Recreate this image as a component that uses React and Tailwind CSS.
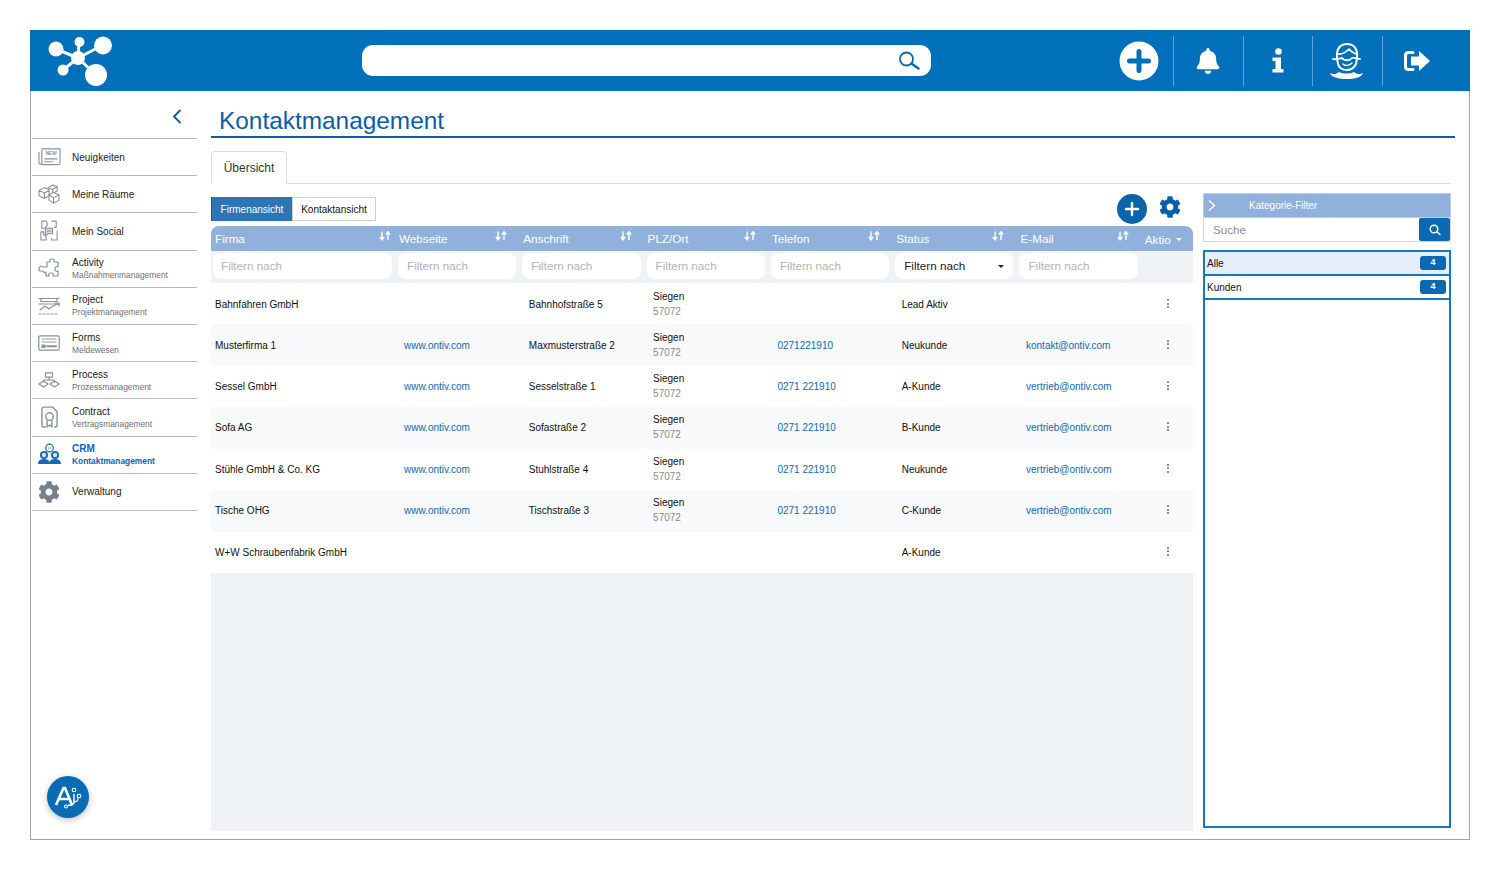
import React from "react";
import { FaBell, FaCog } from "react-icons/fa";

const G = "#87929c";
const stroke = { fill: "none", stroke: G, strokeWidth: 1.2, strokeLinecap: "round", strokeLinejoin: "round" };

const Icons = {
  news: (
    <svg width="23" height="20" viewBox="0 0 24 20" {...stroke}>
      <path d="M4 3v13c0 2-3 2-3 0V5" />
      <path d="M4 1.500h19v15c0 1-1 1.500-2 1.500H4" />
      <text x="8" y="8" fontSize="5" fontWeight="700" fill={G} stroke="none" fontFamily="Liberation Sans">NEW</text>
      <path d="M7 12h13M7 15h8" />
    </svg>
  ),
  rooms: (
    <svg width="22" height="20" viewBox="0 0 24 22" {...stroke}>
      <path d="M1 7l6-3 5 2v7l-5 3-6-3z M1 7l6 3 5-3 M7 10v6" />
      <path d="M11 4l5-3 5 2v5l-3 1 M11 4l5 2 5-3 M16 6v3" />
      <path d="M12 12l5-3 6 3v6l-6 3-5-3z M12 12l5 3 6-3 M17 15v6" />
    </svg>
  ),
  social: (
    <svg width="18" height="22" viewBox="0 0 20 24" {...stroke}>
      <path d="M7 1H2v8h3l3-3V3z M13 1h5v7h-2 M1 13v9h6v-3l-3-3v-3z M19 12v10h-6v-2" />
      <path d="M6 9h8v6H9l-3 2z" fill={G} fillOpacity="0.35" />
      <path d="M8 12h4" />
    </svg>
  ),
  puzzle: (
    <svg width="22" height="22" viewBox="0 0 22 22" {...stroke}>
      <path d="M9 4h3c-1-2 0-3 2-3s3 1 2 3h4v5c-2-1-3 0-3 2s1 3 3 2v5h-5c1-2 0-3-2-3s-3 1-2 3H8v-4c-2 1-3 0-3-1H2c-1 0-1-1-1-2s1-3 2-3l2 1h4z" />
    </svg>
  ),
  project: (
    <svg width="22" height="18" viewBox="0 0 22 18" {...stroke}>
      <path d="M1 1.500h20M3 1.500v3h16v-3M1 7h20" />
      <path d="M2 13l5-4 4 3 4-3 5-2M17 6h4v3" />
      <path d="M1 17h20" strokeDasharray="2 2" />
    </svg>
  ),
  forms: (
    <svg width="22" height="16" viewBox="0 0 22 16" {...stroke}>
      <rect x="0.800" y="0.800" width="20.400" height="14.400" rx="1.500" />
      <path d="M4 4h14M4 7h14" strokeDasharray="1.400 1.200" />
      <rect x="4" y="10" width="3" height="2.400" fill={G} />
      <path d="M9 11.200h9" strokeWidth="2" />
    </svg>
  ),
  process: (
    <svg width="22" height="16" viewBox="0 0 22 16" {...stroke}>
      <rect x="7.500" y="0.800" width="7" height="4.400" />
      <path d="M11 5.200V8M5.500 10V8h11v2" />
      <path d="M5.500 9l4.500 3-4.500 3L1 12z M16.500 9l4.500 3-4.500 3L12 12z" />
    </svg>
  ),
  contract: (
    <svg width="17" height="23" viewBox="0 0 18 24" fill="none" stroke={G} strokeWidth="1.500" strokeLinejoin="round">
      <path d="M5 22H3c-1 0-2-1-2-2V3c0-1 1-2 2-2h9l5 5v14c0 1-1 2-2 2h-1" />
      <circle cx="9" cy="11" r="4" />
      <path d="M6.500 15v7l2.500-2 2.500 2v-7" />
    </svg>
  ),
  crm: (
    <svg width="23" height="23" viewBox="0 0 23 23">
      <circle cx="11.500" cy="5" r="3.800" fill="none" stroke="#1668b8" strokeWidth="1.200" />
      <path d="M10 5h3" stroke="#1668b8" strokeWidth="1" strokeDasharray="1 0.800" />
      <circle cx="6" cy="12" r="4" fill="#1668b8" />
      <circle cx="17" cy="12" r="4" fill="#1668b8" />
      <circle cx="6" cy="12" r="2.200" fill="#cfe0f3" />
      <circle cx="17" cy="12" r="2.200" fill="#cfe0f3" />
      <path d="M0 21c0-4 3-5 6-5s5 1 5.500 3c.5-2 2.500-3 5.500-3s6 1 6 5z" fill="#1668b8" />
    </svg>
  ),
  cog: <FaCog size={22} color="#76818c" />,
};

const NAV = [
  { t: "Neuigkeiten", i: "news" },
  { t: "Meine Räume", i: "rooms" },
  { t: "Mein Social", i: "social" },
  { t: "Activity", s: "Maßnahmenmanagement", i: "puzzle" },
  { t: "Project", s: "Projektmanagement", i: "project" },
  { t: "Forms", s: "Meldewesen", i: "forms" },
  { t: "Process", s: "Prozessmanagement", i: "process" },
  { t: "Contract", s: "Vertragsmanagement", i: "contract" },
  { t: "CRM", s: "Kontaktmanagement", i: "crm", active: true },
  { t: "Verwaltung", i: "cog" },
];

const COLS = ["Firma", "Webseite", "Anschrift", "PLZ/Ort", "Telefon", "Status", "E-Mail"];

const ROWS = [
  ["Bahnfahren GmbH", "", "Bahnhofstraße 5", true, "", "Lead Aktiv", ""],
  ["Musterfirma 1", "www.ontiv.com", "Maxmusterstraße 2", true, "0271221910", "Neukunde", "kontakt@ontiv.com"],
  ["Sessel GmbH", "www.ontiv.com", "Sesselstraße 1", true, "0271 221910", "A-Kunde", "vertrieb@ontiv.com"],
  ["Sofa AG", "www.ontiv.com", "Sofastraße 2", true, "0271 221910", "B-Kunde", "vertrieb@ontiv.com"],
  ["Stühle GmbH & Co. KG", "www.ontiv.com", "Stuhlstraße 4", true, "0271 221910", "Neukunde", "vertrieb@ontiv.com"],
  ["Tische OHG", "www.ontiv.com", "Tischstraße 3", true, "0271 221910", "C-Kunde", "vertrieb@ontiv.com"],
  ["W+W Schraubenfabrik GmbH", "", "", false, "", "A-Kunde", ""],
];

const GRID = "grid grid-cols-[184px_124.300px_124.300px_124.300px_124.300px_124.300px_124.300px_52px]";

function Sort() {
  return (
    <svg width="12" height="10" viewBox="0 0 12 10" fill="none" stroke="#fff" strokeWidth="1.400">
      <path d="M3 0.500v8M0.800 6l2.200 2.800L5.200 6M9 9V1M6.800 3.500L9 0.800l2.200 2.700" />
    </svg>
  );
}

function Dots() {
  return (
    <div className="flex flex-col gap-[1.500px] items-center w-full pl-[2px]">
      <span className="w-[2.500px] h-[2px] bg-[#8a939b]" />
      <span className="w-[2.500px] h-[2px] bg-[#8a939b]" />
      <span className="w-[2.500px] h-[2px] bg-[#8a939b]" />
    </div>
  );
}

function Logo() {
  return (
    <svg width="70" height="54" viewBox="46 33 70 54" fill="#fff" stroke="#fff">
      <path d="M78 57L79 41M78 57L103 44M78 57L56 48M78 57L63 69M78 57L96 74" strokeWidth="3" fill="none" />
      <g stroke="none">
        <circle cx="78" cy="57" r="7" />
        <circle cx="79.500" cy="41" r="5" />
        <circle cx="103" cy="44.500" r="9" />
        <circle cx="56" cy="48" r="7.500" />
        <circle cx="63" cy="69" r="5.500" />
        <circle cx="96" cy="74" r="11" />
      </g>
    </svg>
  );
}

function HeaderCell({ children, sep }) {
  return (
    <div className={`w-[69.500px] h-[50px] flex items-center justify-center ${sep ? "border-r border-[#5fa0d6]" : ""}`}>
      {children}
    </div>
  );
}

export default function App() {
  return (
    <div className="w-[1500px] h-[870px] p-[30px] bg-white [font-family:'Liberation_Sans',Arial,sans-serif] overflow-hidden">
      <div className="w-[1440px] h-[810px] flex flex-col border-x border-b border-[#a3a3a3]">
        {/* Top bar */}
        <header className="h-[61px] -mx-px shrink-0 bg-[#0070ba] flex items-center">
          <div className="ml-[16px] w-[316px]"><Logo /></div>
          <div className="w-[569px] h-[31px] bg-white rounded-[11px] flex items-center justify-end pr-[10px]">
            <svg width="23" height="20" viewBox="0 0 23 20" fill="none" stroke="#0b67ad" strokeWidth="1.800" strokeLinecap="round">
              <circle cx="8.500" cy="8" r="6.500" />
              <path d="M13.500 12.500l7 5" strokeWidth="2.400" />
            </svg>
          </div>
          <div className="ml-auto mr-[18px] flex items-center">
            <HeaderCell sep>
              <svg width="40" height="40" viewBox="0 0 40 40">
                <circle cx="20" cy="20" r="19.500" fill="#fff" />
                <path d="M20 10.500v19M10.500 20h19" stroke="#0070ba" strokeWidth="5" strokeLinecap="round" />
              </svg>
            </HeaderCell>
            <HeaderCell sep><FaBell size={26} color="#fff" /></HeaderCell>
            <HeaderCell sep>
              <svg width="14" height="25" viewBox="0 0 14 25" fill="#fff">
                <circle cx="7.500" cy="3.500" r="3.300" />
                <path d="M1.500 9.500h8.500v11.500h2.500v3.500H1.500V21h3v-8h-3z" />
              </svg>
            </HeaderCell>
            <HeaderCell sep>
              <svg width="36" height="38" viewBox="0 0 36 38" fill="none" stroke="#fff" strokeWidth="2" strokeLinecap="round" strokeLinejoin="round">
                <path d="M8 16C7 6 12 2 18 2c7 0 11 5 10 14l-1 6c-2 4-6 6-9 6-4 0-8-2-9-6z" />
                <path d="M9 12c5 1 9-3 11-5 2 3 5 4 7 5" strokeWidth="1.600" />
                <path d="M4 17c4 1 7-1 9-1 2 3 8 3 10 0 2-1 6 1 8 1" strokeWidth="1.800" />
                <path d="M14 22c2 2 6 2 9-1" strokeWidth="1.500" />
                <path d="M1 31c3 2 7 1 9-1 4 2 11 2 15 0 2 2 6 3 9 1-1 4-8 6-16 6S2 35 1 31z" fill="#fff" stroke="none" />
              </svg>
            </HeaderCell>
            <HeaderCell>
              <svg width="28" height="22" viewBox="0 0 28 22">
                <path d="M10 2.500H5.500C3.500 2.500 2.500 3.500 2.500 5.500v11c0 2 1 3 3 3H10" fill="none" stroke="#fff" strokeWidth="3" strokeLinecap="round" />
                <path d="M16 1l11 10-11 10v-5.500H8v-9h8z" fill="#fff" />
              </svg>
            </HeaderCell>
          </div>
        </header>

        <div className="flex-1 flex min-h-0">
          {/* Sidebar */}
          <aside className="w-[165px] ml-px shrink-0 flex flex-col">
            <div className="h-[48px] shrink-0 flex items-center justify-end pr-[15px] pt-[3px] border-b border-[#b5b9bd]">
              <svg width="10" height="15" viewBox="0 0 10 15" fill="none" stroke="#0b56a4" strokeWidth="1.800" strokeLinecap="round" strokeLinejoin="round">
                <path d="M8 1.500L2 7.500l6 6" />
              </svg>
            </div>
            {NAV.map((n) => (
              <div key={n.t} className="h-[37.200px] shrink-0 flex items-center border-b border-[#b5b9bd]">
                <div className="w-[34px] mr-[6px] h-full flex items-center justify-center shrink-0">{Icons[n.i]}</div>
                <div className="flex flex-col pt-[1px]">
                  <span className={`text-[10px] leading-[12px] ${n.active ? "text-[#0b63c0] font-bold" : "text-[#222]"}`}>{n.t}</span>
                  {n.s && (
                    <span className={`leading-[12px] text-[8.400px] ${n.active ? "text-[#0b63c0] font-bold" : "text-[#6f6f6f]"}`}>{n.s}</span>
                  )}
                </div>
              </div>
            ))}
            <div className="mt-auto mb-[21px] ml-[15px] w-[42px] h-[42px] rounded-full bg-[#0a6ab4] flex items-center justify-center shadow-[0_2px_7px_rgba(0,0,0,0.25)]">
              <svg width="28" height="26" viewBox="0 0 28 26" fill="none" stroke="#fff">
                <path d="M2 21L9.500 4h1.500L18 21M5 15h10" strokeWidth="2.600" />
                <path d="M20 10v8c0 3-3 4-6 3" strokeWidth="1.400" />
                <circle cx="20" cy="6" r="1.800" strokeWidth="1.100" />
                <circle cx="25" cy="12" r="1.800" strokeWidth="1.100" />
                <circle cx="12" cy="22.500" r="1.500" strokeWidth="1.100" />
                <path d="M20 18c2 0 4-1 4-4" strokeWidth="1.100" />
              </svg>
            </div>
          </aside>

          {/* Main */}
          <main className="ml-[14px] flex-1 min-w-0 flex flex-col pr-[14px]">
            <div className="h-[47px] shrink-0 border-b-2 border-[#0b5cab] pl-[8px] flex items-end">
              <h1 className="text-[24.400px] leading-[30px] text-[#0b5cab] font-normal">Kontaktmanagement</h1>
            </div>
            <div className="mt-[13px] mr-[4px] h-[33px] shrink-0 border-b border-[#dcdcdc] flex">
              <div className="w-[76px] h-[33px] border border-b-white border-[#dcdcdc] rounded-t-[4px] bg-white flex items-center justify-center text-[12px] text-[#333]">Übersicht</div>
            </div>

            <div className="flex-1 min-h-0 flex gap-[10px] pr-[4px]">
              {/* Table column */}
              <div className="w-[982px] shrink-0 flex flex-col mb-[8px]">
                <div className="h-[42px] shrink-0 flex items-start">
                  <div className="mt-[13px] flex h-[24px] text-[10px]">
                    <div className="w-[81px] bg-[#2d76b6] border-l border-[#0b5cab] text-white flex items-center justify-center">Firmenansicht</div>
                    <div className="w-[84px] bg-white border border-[#cfcfcf] text-[#111] flex items-center justify-center">Kontaktansicht</div>
                  </div>
                  <div className="ml-auto mt-[10px] mr-[12px] flex items-center gap-[12px]">
                    <div className="w-[30px] h-[30px] rounded-full bg-[#0a64ac] flex items-center justify-center">
                      <svg width="16" height="16" viewBox="0 0 16 16" stroke="#fff" strokeWidth="2.400" strokeLinecap="round">
                        <path d="M8 2v12M2 8h12" />
                      </svg>
                    </div>
                    <div className="-mt-[4px]"><FaCog size={22} color="#0b5cab" /></div>
                  </div>
                </div>

                <div className={`${GRID} h-[25px] shrink-0 bg-[#8fb1dc] rounded-t-[8px] text-white text-[11.700px] items-center overflow-hidden`}>
                  {COLS.map((c, i) => (
                    <div key={c} className={`pl-[4px] flex justify-between ${i === 0 ? "pr-[4px]" : "pr-[12px]"}`}>
                      <span className="mt-[1px]">{c}</span>
                      <span className="mt-[2px]"><Sort /></span>
                    </div>
                  ))}
                  <div className="pl-[4px] mt-[3px] flex items-center gap-[5px]">
                    <span>Aktio</span>
                    <span className="w-0 h-0 border-x-[3px] border-x-transparent border-t-[3px] border-t-white" />
                  </div>
                </div>

                <div className={`${GRID} h-[32px] shrink-0 bg-[#eff3f5] items-center text-[11.700px] pb-[2px]`}>
                  {COLS.map((c, i) => (
                    <div key={c} className={i === 0 ? "pl-[2px] pr-[3px]" : "px-[3px]"}>
                      <div className={`h-[26px] bg-white rounded-[8px] flex items-center ${i === 0 ? "px-[8px]" : "px-[9px]"} ${c === "Status" ? "text-[#222] justify-between" : "text-[#b3b3b3]"}`}>
                        <span>Filtern nach</span>
                        {c === "Status" && <span className="w-0 h-0 border-x-[3.500px] border-x-transparent border-t-[3.500px] border-t-[#222]" />}
                      </div>
                    </div>
                  ))}
                  <div />
                </div>

                {ROWS.map((r, i) => (
                  <div key={r[0]} className={`${GRID} h-[41.430px] shrink-0 items-center text-[10px] text-[#111] ${i % 2 ? "bg-[#f7f9fa]" : "bg-white"} ${i === 0 ? "pt-[2px]" : ""}`}>
                    <div className="pl-[4px] whitespace-nowrap">{r[0]}</div>
                    <div className="pl-[9px] text-[#0f69b4]">{r[1]}</div>
                    <div className="pl-[9.500px]">{r[2]}</div>
                    <div className="pl-[9.500px]">
                      {r[3] && (
                        <div className="flex flex-col gap-[3px] leading-[12px]">
                          <span>Siegen</span>
                          <span className="text-[#8a8a8a]">57072</span>
                        </div>
                      )}
                    </div>
                    <div className="pl-[9.500px] text-[#0f69b4]">{r[4]}</div>
                    <div className="pl-[9.500px]">{r[5]}</div>
                    <div className="pl-[9.500px] text-[#0f69b4]">{r[6]}</div>
                    <div className="-mt-[2px]"><Dots /></div>
                  </div>
                ))}
                <div className="flex-1 bg-[#eef2f5]" />
              </div>

              {/* Right panel */}
              <div className="flex-1 min-w-0 flex flex-col mt-[9px] mb-[11px]">
                <div className="h-[25px] shrink-0 bg-[#8fb1dc] border border-[#b9cde8] flex items-center text-white text-[10px]">
                  <svg className="ml-[4px]" width="8" height="11" viewBox="0 0 8 11" fill="none" stroke="#fff" strokeWidth="1.600" strokeLinecap="round" strokeLinejoin="round">
                    <path d="M1.500 1l5 4.500-5 4.500" />
                  </svg>
                  <span className="ml-[33px]">Kategorie-Filter</span>
                </div>
                <div className="h-[24px] shrink-0 flex border-x border-b border-[#d4d4d4]">
                  <div className="flex-1 pl-[9px] flex items-center text-[11.600px] text-[#8c8c8c]">Suche</div>
                  <div className="w-[31px] bg-[#0b69b3] flex items-center justify-center rounded-[2px]">
                    <svg width="12" height="12" viewBox="0 0 12 12" fill="none" stroke="#fff" strokeWidth="1.400" strokeLinecap="round">
                      <circle cx="5" cy="5" r="3.800" />
                      <path d="M8 8l3 2.500" />
                    </svg>
                  </div>
                </div>
                <div className="mt-[8px] flex-1 border-2 border-[#1877bb] bg-white text-[10px] text-[#111]">
                  <div className="h-[24px] bg-[#e6edfb] flex items-center justify-between pl-[2px] pr-[3px] border-b-2 border-[#1877bb]">
                    <span>Alle</span>
                    <span className="w-[26px] h-[14px] bg-[#0b69b3] rounded-[3px] text-white text-[9px] font-bold flex items-center justify-center">4</span>
                  </div>
                  <div className="h-[24px] flex items-center justify-between pl-[2px] pr-[3px] border-b-2 border-[#1877bb]">
                    <span>Kunden</span>
                    <span className="w-[26px] h-[14px] bg-[#0b69b3] rounded-[3px] text-white text-[9px] font-bold flex items-center justify-center">4</span>
                  </div>
                </div>
              </div>
            </div>
          </main>
        </div>
      </div>
    </div>
  );
}
